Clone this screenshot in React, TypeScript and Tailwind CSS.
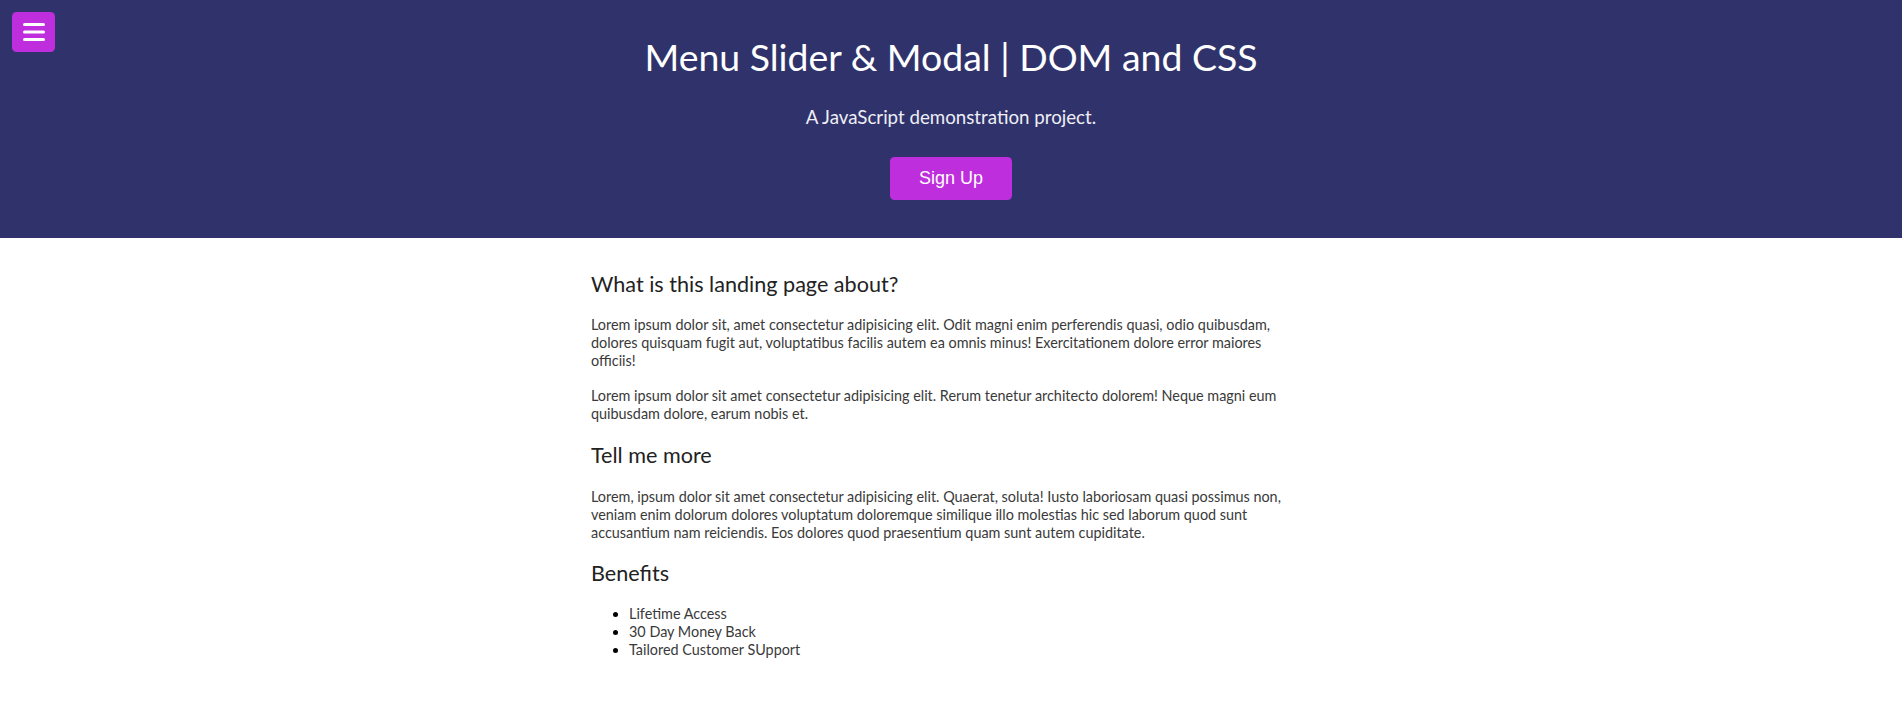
import React from "react";

export default function App() {
  return (
    <div className="min-h-[701px] bg-white text-[#3a3a3a]" style={{ fontFamily: "Lato, 'Open Sans', sans-serif" }}>
      <header className="relative bg-[#30336b] px-[13.5px] pb-[38.5px] pt-[35px] text-center text-[18.72px] text-white">
        <button className="absolute left-[12px] top-[12px] flex h-[40px] w-[43px] cursor-pointer items-center justify-center rounded-[4.5px] bg-[#be2edd]">
          <svg width="22" height="20" viewBox="0 0 22 20" fill="none">
            <line x1="1.5" y1="2.5" x2="20.5" y2="2.5" stroke="white" strokeWidth="3" strokeLinecap="round" />
            <line x1="1.5" y1="10" x2="20.5" y2="10" stroke="white" strokeWidth="3" strokeLinecap="round" />
            <line x1="1.5" y1="17.5" x2="20.5" y2="17.5" stroke="white" strokeWidth="3" strokeLinecap="round" />
          </svg>
        </button>
        <h1 className="m-0 text-[37.44px] font-normal leading-[1.2]">Menu Slider &amp; Modal | DOM and CSS</h1>
        <p className="mb-[29px] mt-[26px] font-normal leading-[1.2] text-[#eeeef5]">A JavaScript demonstration project.</p>
        <button
          className="cursor-pointer rounded-[4.5px] bg-[#be2edd] px-[29px] py-[10.8px] text-[18px] leading-[1.15] text-white"
          style={{ fontFamily: "'Liberation Sans', Arial, sans-serif" }}
        >
          Sign Up
        </button>
      </header>
      <div className="flex justify-center pr-[8px]">
        <div className="w-[712px] box-content px-[13.5px] py-[13.5px] text-[14.4px] font-normal leading-[18px]">
          <h2 className="mb-[18.5px] mt-[19px] text-[21.6px] font-normal leading-[1.25] text-[#222]">What is this landing page about?</h2>
          <p className="my-[16.5px]">
            Lorem ipsum dolor sit, amet consectetur adipisicing elit. Odit magni enim perferendis quasi, odio quibusdam, dolores quisquam fugit aut, voluptatibus facilis autem ea omnis minus! Exercitationem dolore error maiores officiis!
          </p>
          <p className="my-[16.5px]">
            Lorem ipsum dolor sit amet consectetur adipisicing elit. Rerum tenetur architecto dolorem! Neque magni eum quibusdam dolore, earum nobis et.
          </p>
          <h2 className="mb-[18.5px] mt-[19.5px] text-[21.6px] font-normal leading-[1.25] text-[#222]">Tell me more</h2>
          <p className="my-[16.5px]">
            Lorem, ipsum dolor sit amet consectetur adipisicing elit. Quaerat, soluta! Iusto laboriosam quasi possimus non, veniam enim dolorum dolores voluptatum doloremque similique illo molestias hic sed laborum quod sunt accusantium nam reiciendis. Eos dolores quod praesentium quam sunt autem cupiditate.
          </p>
          <h2 className="mb-[18.5px] mt-[18px] text-[21.6px] font-normal leading-[1.25] text-[#222]">Benefits</h2>
          <ul className="my-[16.5px] list-disc pl-[38px] marker:text-black">
            <li>Lifetime Access</li>
            <li>30 Day Money Back</li>
            <li>Tailored Customer SUpport</li>
          </ul>
        </div>
      </div>
    </div>
  );
}
